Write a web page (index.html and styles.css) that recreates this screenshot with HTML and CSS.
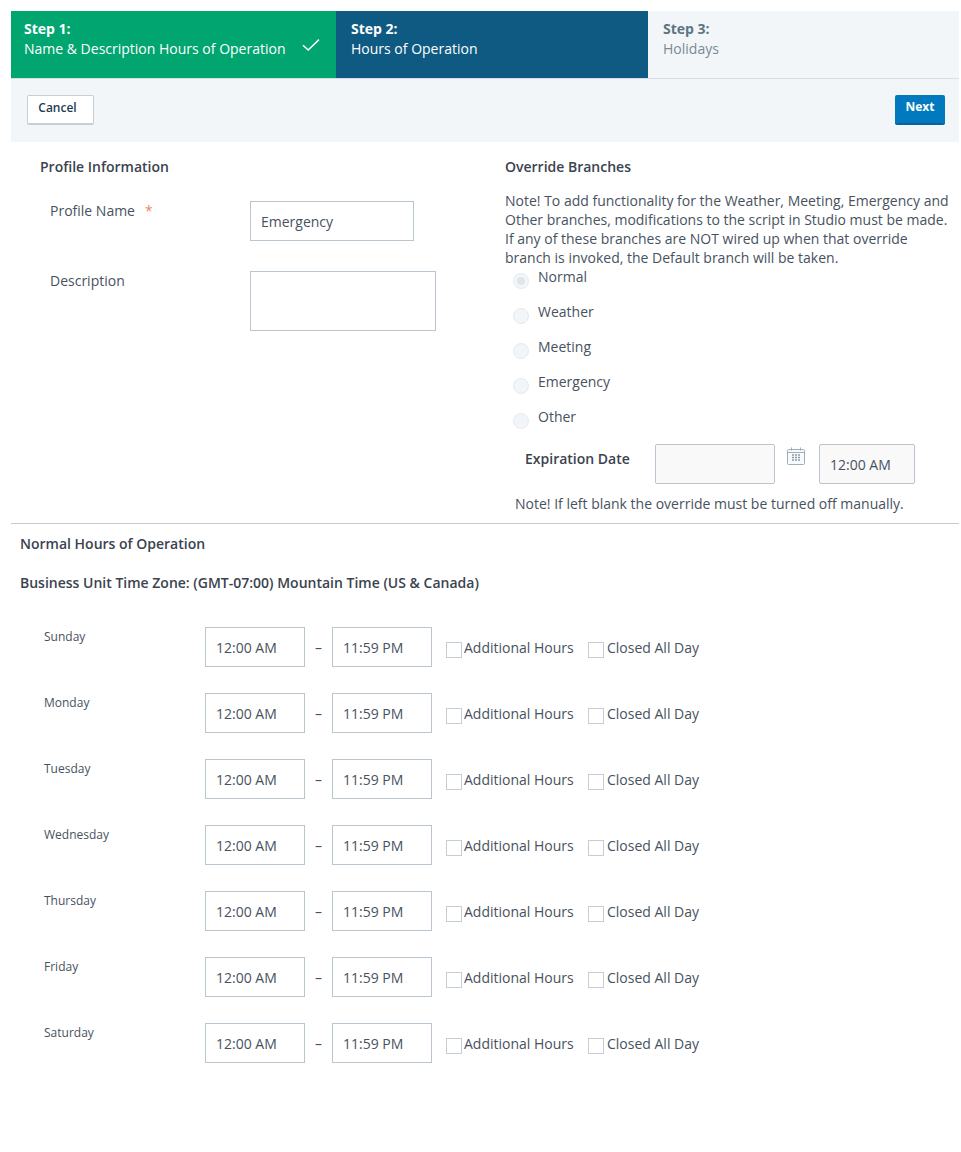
FILE: index.html
```html
<!DOCTYPE html>
<html lang="en">
<head>
<meta charset="utf-8">
<title>Hours of Operation</title>
<link rel="stylesheet" href="styles.css">
</head>
<body>
<div class="page">
  <div class="steps">
    <div class="step step-done">
      <div><div class="step-title">Step 1:</div><div class="step-name">Name &amp; Description Hours of Operation</div></div>
      <svg class="step-check" width="18" height="14" viewBox="0 0 18 14"><path d="M1 7.2 L6.2 12 L17 1.6" fill="none" stroke="#fff" stroke-width="1.5"/></svg>
    </div>
    <div class="step step-current">
      <div><div class="step-title">Step 2:</div><div class="step-name">Hours of Operation</div></div>
    </div>
    <div class="step step-next">
      <div><div class="step-title">Step 3:</div><div class="step-name">Holidays</div></div>
    </div>
  </div>
  <div class="toolbar">
    <button class="btn btn-cancel">Cancel</button>
    <button class="btn btn-next">Next</button>
  </div>
  <div class="top">
    <section class="profile">
      <h2 class="heading">Profile Information</h2>
      <div class="field field-name">
        <label class="field-label">Profile Name<span class="req">*</span></label>
        <div class="box name-box">Emergency</div>
      </div>
      <div class="field">
        <label class="field-label">Description</label>
        <div class="box desc-box"></div>
      </div>
    </section>
    <section class="override">
      <h2 class="heading">Override Branches</h2>
      <p class="note">Note! To add functionality for the Weather, Meeting, Emergency and Other branches, modifications to the script in Studio must be made. If any of these branches are NOT wired up when that override branch is invoked, the Default branch will be taken.</p>
      <div class="radios">
        <div class="radio-row"><span class="radio radio-on"></span><span>Normal</span></div>
        <div class="radio-row"><span class="radio"></span><span>Weather</span></div>
        <div class="radio-row"><span class="radio"></span><span>Meeting</span></div>
        <div class="radio-row"><span class="radio"></span><span>Emergency</span></div>
        <div class="radio-row"><span class="radio"></span><span>Other</span></div>
      </div>
      <div class="expiry">
        <span class="expiry-label">Expiration Date</span>
        <div class="box box-off date-box"></div>
        <svg class="cal" width="18" height="18" viewBox="0 0 18 18">
          <rect x="0.5" y="2.5" width="17" height="15" rx="1" fill="#f7f9fa" stroke="#9fb0ba"/>
          <path d="M1 5.5H17" stroke="#9fb0ba"/>
          <path d="M4.5 .5V3.5M13.5 .5V3.5" stroke="#9fb0ba"/>
          <path d="M5 8h2M8 8h2M11 8h2M5 10.5h2M8 10.5h2M11 10.5h2M5 13h2M8 13h2M11 13h2" stroke="#8a9ca7" stroke-width="1.4"/>
        </svg>
        <div class="box box-off time-box">12:00 AM</div>
      </div>
      <p class="expiry-note">Note! If left blank the override must be turned off manually.</p>
    </section>
  </div>
  <div class="hours">
    <h2 class="heading hours-title">Normal Hours of Operation</h2>
    <h2 class="heading tz">Business Unit Time Zone: (GMT-07:00) Mountain Time (US &amp; Canada)</h2>
    <div class="days">
      <div class="day"><span class="day-name">Sunday</span><div class="box time">12:00 AM</div><span class="dash">–</span><div class="box time">11:59 PM</div><span class="check check-add"></span><span class="check-label add-label">Additional Hours</span><span class="check"></span><span class="check-label">Closed All Day</span></div>
      <div class="day"><span class="day-name">Monday</span><div class="box time">12:00 AM</div><span class="dash">–</span><div class="box time">11:59 PM</div><span class="check check-add"></span><span class="check-label add-label">Additional Hours</span><span class="check"></span><span class="check-label">Closed All Day</span></div>
      <div class="day"><span class="day-name">Tuesday</span><div class="box time">12:00 AM</div><span class="dash">–</span><div class="box time">11:59 PM</div><span class="check check-add"></span><span class="check-label add-label">Additional Hours</span><span class="check"></span><span class="check-label">Closed All Day</span></div>
      <div class="day"><span class="day-name">Wednesday</span><div class="box time">12:00 AM</div><span class="dash">–</span><div class="box time">11:59 PM</div><span class="check check-add"></span><span class="check-label add-label">Additional Hours</span><span class="check"></span><span class="check-label">Closed All Day</span></div>
      <div class="day"><span class="day-name">Thursday</span><div class="box time">12:00 AM</div><span class="dash">–</span><div class="box time">11:59 PM</div><span class="check check-add"></span><span class="check-label add-label">Additional Hours</span><span class="check"></span><span class="check-label">Closed All Day</span></div>
      <div class="day"><span class="day-name">Friday</span><div class="box time">12:00 AM</div><span class="dash">–</span><div class="box time">11:59 PM</div><span class="check check-add"></span><span class="check-label add-label">Additional Hours</span><span class="check"></span><span class="check-label">Closed All Day</span></div>
      <div class="day"><span class="day-name">Saturday</span><div class="box time">12:00 AM</div><span class="dash">–</span><div class="box time">11:59 PM</div><span class="check check-add"></span><span class="check-label add-label">Additional Hours</span><span class="check"></span><span class="check-label">Closed All Day</span></div>
    </div>
  </div>
</div>
</body>
</html>
```
FILE: styles.css
```css
* { box-sizing: border-box; }
html, body { margin: 0; background: #fff; }
body {
  font-family: "Open Sans", "Liberation Sans", sans-serif;
  font-size: 14px;
  line-height: 19px;
  color: #48525e;
}
.page { margin: 0 2px 0 11px; padding: 11px 0 88px; }
.steps { display: grid; grid-template-columns: 325px 312px 311px; height: 67px; }
.step { padding: 8px 13px 0 13px; }
.step-title { font-weight: 700; margin-bottom: 1px; }
.step-name { line-height: 20px; }
.step-done { background: #00a56f; color: #fff; display: flex; justify-content: space-between; }
.step-check { margin: 19px 3px 0 0; }
.step-current { background: #0e5a82; color: #fff; padding-left: 15px; }
.step-next { background: #f2f6f9; color: #7a8a95; padding-left: 15px; }
.step-next .step-title { color: #5f7482; }
.toolbar {
  height: 64px;
  background: #f2f6f9;
  border-top: 1px solid #d5dfe8;
  padding: 16px 14px 0 16px;
  display: flex;
  justify-content: space-between;
  align-items: flex-start;
}
.btn {
  font-family: inherit;
  font-size: 12px;
  line-height: 16px;
  font-weight: 600;
  border-radius: 2px;
  height: 30px;
  padding: 0 0 4px;
}
.btn-cancel { width: 67px; background: #fff; color: #1f3b53; border: 1px solid #c6ced6; border-bottom-width: 2px; padding-right: 6px; }
.btn-next { width: 50px; background: #0079be; color: #fff; border: 0; border-bottom: 2px solid #06649a; font-weight: 700; padding-bottom: 5px; }
.top { display: flex; height: 382px; border-bottom: 1px solid #c4c9cc; }
.heading { margin: 0; font-size: 14px; line-height: 19px; font-weight: 600; color: #3a434e; }
.profile { width: 494px; padding: 15px 0 0 29px; }
.field { display: flex; }
.field-label { width: 210px; padding-left: 10px; }
.req { color: #f0855a; margin-left: 10px; }
.box { border: 1px solid #b9c6d0; background: #fff; }
.name-box { width: 164px; height: 40px; padding: 10px; line-height: 20px; }
.field-name { margin: 25px 0 30px; }
.desc-box { width: 186px; height: 60px; }
.override { flex: 1; padding-top: 15px; }
.note { margin: 15px 0 0; width: 446px; }
.radios { padding: 0 0 0 8px; }
.radio-row { display: flex; height: 35px; align-items: flex-start; gap: 9px; }
.radio { width: 16px; height: 16px; border-radius: 50%; background: #f2f6f9; border: 1px solid #e4ebf0; margin-top: 6px; position: relative; flex: none; }
.radio-on::after { content: ""; position: absolute; inset: 3px; border-radius: 50%; background: #dfe5e9; }
.expiry { display: flex; margin: 2px 0 0 20px; }
.expiry-label { width: 130px; font-weight: 600; padding-top: 5px; color: #3a434e; }
.box-off { background: #f9f9f9; border-radius: 2px; }
.date-box { width: 120px; height: 40px; }
.cal { margin: 3px 14px 0 12px; flex: none; }
.time-box { width: 96px; height: 40px; padding: 10px; line-height: 20px; }
.expiry-note { margin: 10px 0 0 10px; }
.hours { padding: 10px 0 0 9px; }
.tz { margin-top: 20px; }
.days { margin-top: 35px; display: flex; flex-direction: column; gap: 26px; }
.day { display: flex; height: 40px; align-items: flex-start; }
.day-name { width: 185px; padding-left: 24px; font-size: 12px; line-height: 16px; padding-top: 2px; }
.time { width: 100px; height: 40px; padding: 10px; line-height: 20px; }
.dash { width: 27px; text-align: center; padding-top: 11px; }
.check { width: 16px; height: 16px; border: 1px solid #c3ced6; background: #fff; margin-top: 15px; flex: none; }
.check-add { margin-left: 14px; }
.check-label { margin-left: 3px; padding-top: 11px; }
.add-label { width: 124px; margin-left: 2px; }
```
